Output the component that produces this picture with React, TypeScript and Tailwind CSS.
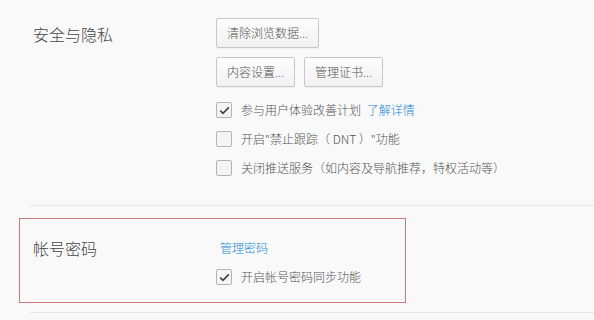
import { ReactNode } from "react";

const font = { fontFamily: '"Noto Sans CJK SC", "Noto Sans", sans-serif' };

function Btn({ children }: { children: ReactNode }) {
  return (
    <button className="h-[30px] px-[10px] border border-[#c8c8c8] rounded-[2px] bg-gradient-to-b from-[#fdfdfd] to-[#f1f1f1] text-[12px] text-[#555] shadow-[0_1px_0_rgba(0,0,0,0.04)]">
      {children}
    </button>
  );
}

function Check({ checked, children }: { checked?: boolean; children: ReactNode }) {
  return (
    <label className="flex items-center h-[16px] gap-[9px] text-[12px] text-[#555]">
      <span className="w-[16px] h-[16px] shrink-0 border border-[#b4b4b4] rounded-[2px] bg-[#f4f4f4] flex items-center justify-center">
        {checked && (
          <svg width="11" height="9" viewBox="0 0 11 9">
            <path d="M1.2 4.6 L4 7.3 L9.8 1.4" fill="none" stroke="#444" strokeWidth="1.7" />
          </svg>
        )}
      </span>
      <span>{children}</span>
    </label>
  );
}

export default function App() {
  return (
    <div className="w-[594px] h-[320px] bg-[#f9f9f9] overflow-hidden font-light" style={font}>
      {/* 安全与隐私 */}
      <div className="grid grid-cols-[183px_1fr] pl-[33px] pt-[18px]">
        <div className="text-[16px] leading-[24px] text-[#444] pt-[4px]">安全与隐私</div>
        <div className="flex flex-col">
          <div className="flex">
            <Btn>清除浏览数据...</Btn>
          </div>
          <div className="flex gap-[9px] mt-[9px]">
            <Btn>内容设置...</Btn>
            <Btn>管理证书...</Btn>
          </div>
          <div className="flex flex-col gap-[13px] mt-[15px]">
            <Check checked>
              参与用户体验改善计划 <span className="ml-[3px] text-[#1a87d8]">了解详情</span>
            </Check>
            <Check>开启"禁止跟踪（ DNT ）"功能</Check>
            <Check>关闭推送服务（如内容及导航推荐，特权活动等）</Check>
          </div>
        </div>
      </div>
      <div className="ml-[30px] mt-[29px] border-t border-[#e6e6e6]" />

      {/* 帐号密码 */}
      <div className="ml-[19px] mt-[12px] w-[387px] h-[85px] border border-[#d0777c] grid grid-cols-[183px_1fr] pl-[13px] pt-[17px]">
        <div className="text-[16px] leading-[24px] text-[#444]">帐号密码</div>
        <div className="flex flex-col">
          <div className="pl-[4px] text-[12px] leading-[18px] text-[#1a87d8] mt-[3px]">管理密码</div>
          <div className="mt-[12px]">
            <Check checked>开启帐号密码同步功能</Check>
          </div>
        </div>
      </div>
      <div className="ml-[30px] mt-[9px] border-t border-[#e6e6e6]" />
    </div>
  );
}
